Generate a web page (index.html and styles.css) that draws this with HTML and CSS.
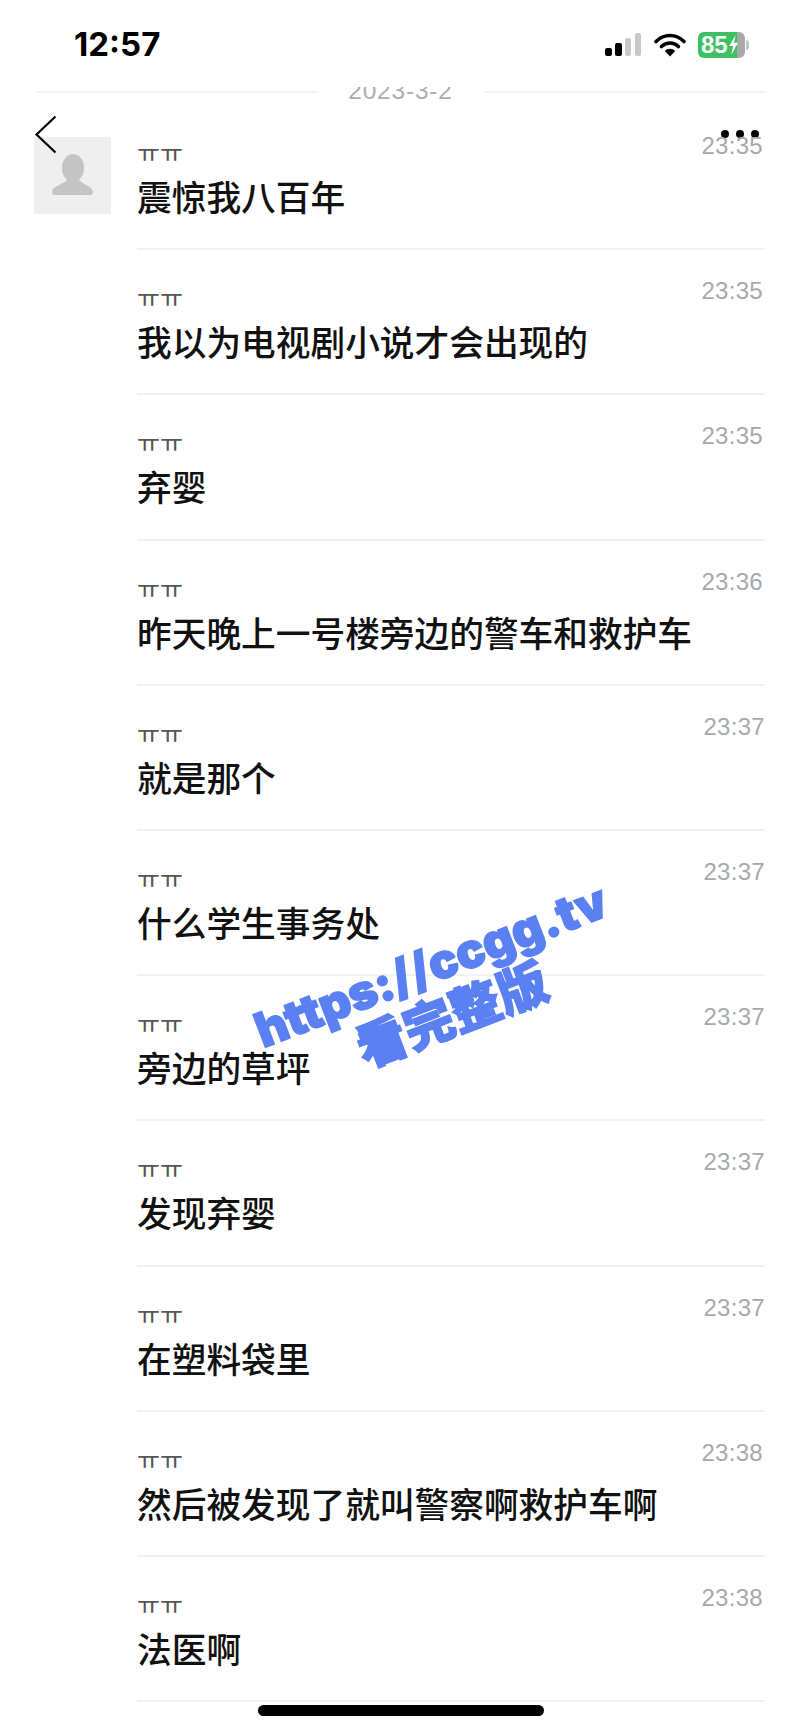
FILE: index.html
```html
<!DOCTYPE html>
<html lang="zh-CN">
<head>
    <meta charset="UTF-8">
    <title>聊天记录</title>
    <link rel="stylesheet" href="styles.css">
</head>
<body>
    <div class="status-bar">
        <span class="clock">12:57</span>
        <div class="status-icons">
            <svg class="signal" width="36" height="24" viewBox="0 0 36 24">
                <rect x="0" y="15" width="7" height="8" rx="2" fill="#000"/>
                <rect x="10" y="10" width="7" height="13" rx="2" fill="#000"/>
                <rect x="20" y="5" width="6" height="18" rx="2" fill="#c9c9c9"/>
                <rect x="30" y="0" width="6" height="23" rx="2" fill="#c9c9c9"/>
            </svg>
            <svg class="wifi" width="32" height="24" viewBox="0 0 32 24">
                <path d="M2 8.500 C10 0.500 22 0.500 30 8.500" fill="none" stroke="#000" stroke-width="3.600" stroke-linecap="round"/>
                <path d="M7.500 13.500 C12.500 8.800 19.500 8.800 24.500 13.500" fill="none" stroke="#000" stroke-width="3.600" stroke-linecap="round"/>
                <path d="M10.800 18 C13.500 15 18.500 15 21.200 18 L16 23.500 Z" fill="#000"/>
            </svg>
            <div class="battery">
                <span class="battery-num">85</span>
                <svg class="bolt" width="11" height="20" viewBox="0 0 10 18"><path d="M7 0 L1 10 H4.500 L3 18 L9 7 H5.500 Z" fill="#fff"/></svg>
                <span class="battery-cap"></span>
            </div>
        </div>
    </div>

    <div class="date-row">
        <span class="date-line"></span>
        <span class="date-text">2023-3-2</span>
        <span class="date-line"></span>
    </div>

    <!-- overlaid nav bar icons -->
    <svg class="back" width="24" height="40" viewBox="0 0 24 40">
        <path d="M21.500 1.500 L2.500 19.500 L21.500 37.500" fill="none" stroke="#000" stroke-width="2.200"/>
    </svg>
    <div class="dots"><i></i><i></i><i></i></div>

    <div class="list">
        <div class="row">
            <div class="avatar">
                <svg width="77" height="77" viewBox="0 0 77 77">
                    <ellipse cx="39" cy="31" rx="11" ry="14" fill="#c4c4c4"/>
                    <path d="M18 55 C18 49 28 48 33 43 H45 C50 48 58 49 59 55 C59 57 58 58 56 58 H21 C19 58 18 57 18 55 Z" fill="#c4c4c4"/>
                </svg>
            </div>
            <div class="body">
                <span class="time">23:35</span>
                <div class="name">ㅠㅠ</div>
                <div class="text">震惊我八百年</div>
            </div>
        </div>
        <div class="row">
            <div class="body">
                <span class="time">23:35</span>
                <div class="name">ㅠㅠ</div>
                <div class="text">我以为电视剧小说才会出现的</div>
            </div>
        </div>
        <div class="row">
            <div class="body">
                <span class="time">23:35</span>
                <div class="name">ㅠㅠ</div>
                <div class="text">弃婴</div>
            </div>
        </div>
        <div class="row">
            <div class="body">
                <span class="time">23:36</span>
                <div class="name">ㅠㅠ</div>
                <div class="text">昨天晚上一号楼旁边的警车和救护车</div>
            </div>
        </div>
        <div class="row">
            <div class="body">
                <span class="time shifted">23:37</span>
                <div class="name">ㅠㅠ</div>
                <div class="text">就是那个</div>
            </div>
        </div>
        <div class="row">
            <div class="body">
                <span class="time shifted">23:37</span>
                <div class="name">ㅠㅠ</div>
                <div class="text">什么学生事务处</div>
            </div>
        </div>
        <div class="row">
            <div class="body">
                <span class="time shifted">23:37</span>
                <div class="name">ㅠㅠ</div>
                <div class="text">旁边的草坪</div>
            </div>
        </div>
        <div class="row">
            <div class="body">
                <span class="time shifted">23:37</span>
                <div class="name">ㅠㅠ</div>
                <div class="text">发现弃婴</div>
            </div>
        </div>
        <div class="row">
            <div class="body">
                <span class="time shifted">23:37</span>
                <div class="name">ㅠㅠ</div>
                <div class="text">在塑料袋里</div>
            </div>
        </div>
        <div class="row">
            <div class="body">
                <span class="time">23:38</span>
                <div class="name">ㅠㅠ</div>
                <div class="text">然后被发现了就叫警察啊救护车啊</div>
            </div>
        </div>
        <div class="row">
            <div class="body">
                <span class="time">23:38</span>
                <div class="name">ㅠㅠ</div>
                <div class="text">法医啊</div>
            </div>
        </div>
    </div>

    <div class="watermark">
        <div class="wm-url">https://ccgg.tv</div>
        <div class="wm-cn">看完整版</div>
    </div>

    <div class="home-bar"></div>
</body>
</html>
```
FILE: styles.css
```css
body {
    margin: 0;
    width: 800px;
    height: 1733px;
    overflow: hidden;
    position: relative;
    background: #fff;
    font-family: "Noto Sans CJK SC", "Liberation Sans", sans-serif;
    color: #111;
}

/* status bar */
.status-bar {
    height: 87px;
    padding: 0 55px 0 74px;
    display: flex;
    align-items: center;
    justify-content: space-between;
    box-sizing: border-box;
}
.clock {
    font-family: "Inter", "Liberation Sans", sans-serif;
    font-size: 33px;
    font-weight: 700;
    color: #000;
}
.status-icons {
    display: flex;
    align-items: center;
    gap: 12px;
    margin-top: 2px;
}
.signal {
    margin-right: 1px;
}
.battery {
    width: 47px;
    height: 26px;
    background: linear-gradient(90deg, #3cc061 83%, #a9a9a9 83%);
    border-radius: 6px;
    display: flex;
    align-items: center;
    padding-left: 3px;
    box-sizing: border-box;
    position: relative;
}
.battery-num {
    font-family: "Liberation Sans", sans-serif;
    font-size: 24px;
    font-weight: 700;
    color: #fff;
}
.battery-cap {
    position: absolute;
    right: -4px;
    top: 8px;
    width: 3px;
    height: 10px;
    border-radius: 0 3px 3px 0;
    background: #c4c4c4;
}

/* date divider, top of the digits is cut by the nav bar */
.date-row {
    height: 14px;
    margin: 0 35px 0 36px;
    display: flex;
    align-items: flex-start;
    gap: 31px;
    overflow: hidden;
}
.date-line {
    flex: 1;
    height: 2px;
    margin-top: 4px;
    background: #f3f3f3;
}
.date-text {
    font-family: "Liberation Sans", sans-serif;
    font-size: 24.500px;
    line-height: 24px;
    margin-top: -8px;
    letter-spacing: 0.8px;
    color: #aeaeae;
}

.back {
    position: absolute;
    left: 34px;
    top: 115px;
}
.dots {
    position: absolute;
    left: 721px;
    top: 130px;
    display: flex;
    gap: 7px;
}
.dots i {
    width: 8px;
    height: 8px;
    border-radius: 50%;
    background: #000;
}

/* message list */
.list {
    padding: 4px 35px 0 34px;
}
.row {
    display: flex;
}
.avatar {
    width: 77px;
    height: 77px;
    margin-top: 32px;
    margin-right: 26px;
    background: #efefef;
    flex-shrink: 0;
}
.body {
    flex: 1;
    margin-left: 103px;
    height: 143.200px;
    border-bottom: 2px solid #f1f1f1;
    position: relative;
}
.avatar + .body {
    margin-left: 0;
}
.time {
    position: absolute;
    right: 2px;
    top: 27px;
    font-family: "Liberation Sans", sans-serif;
    font-size: 24px;
    letter-spacing: 0.3px;
    color: #a9a9a9;
}
.time.shifted {
    right: 0;
}
.name {
    padding-top: 31px;
    font-size: 25px;
    line-height: 30px;
    color: #555;
}
.text {
    margin-top: 5px;
    font-size: 34.700px;
    line-height: 50px;
    font-weight: 500;
    color: #111;
}

/* watermark */
.watermark {
    position: absolute;
    left: 245px;
    top: 939px;
    width: 390px;
    text-align: center;
    transform: rotate(-21deg);
    color: #5a80f2;
}
.wm-url {
    font-family: "Inter", "Liberation Sans", sans-serif;
    font-size: 48px;
    line-height: 50px;
    font-weight: 900;
    -webkit-text-stroke: 1.500px #5a80f2;
    white-space: nowrap;
}
.wm-cn {
    padding-left: 4px;
    font-size: 50px;
    line-height: 50px;
    font-weight: 900;
    -webkit-text-stroke: 1.500px #5a80f2;
}

.home-bar {
    position: absolute;
    left: 258px;
    top: 1705px;
    width: 286px;
    height: 11px;
    border-radius: 6px;
    background: #000;
}
```
